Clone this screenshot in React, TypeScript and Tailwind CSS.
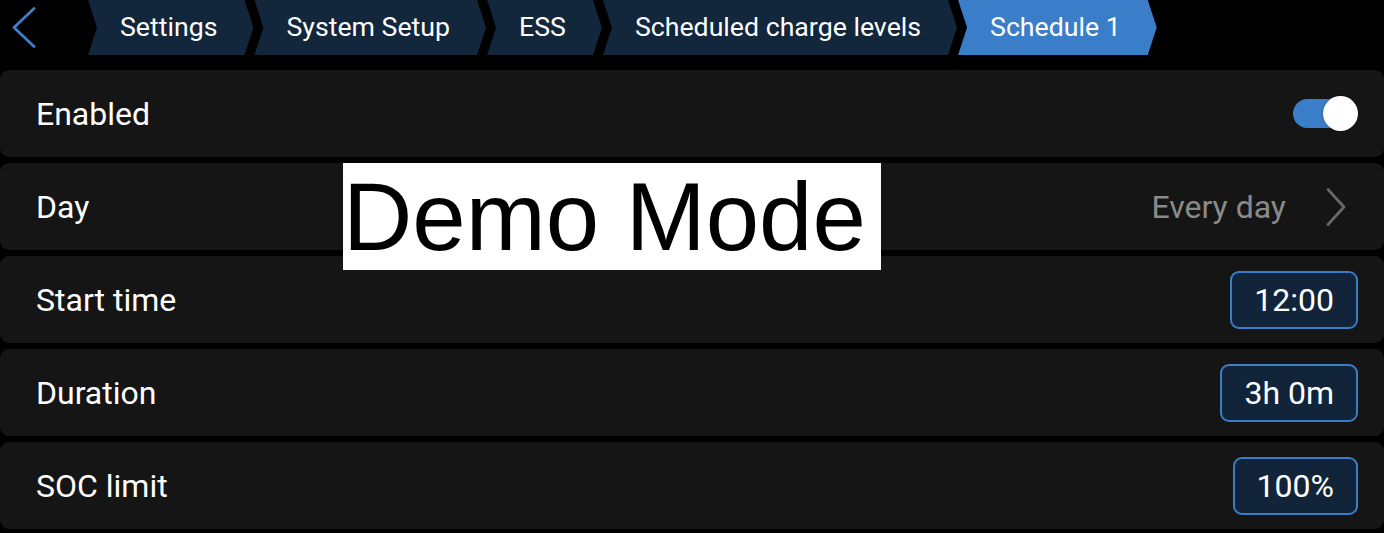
import React from "react";

const crumbs = [
  { label: "Settings", active: false },
  { label: "System Setup", active: false },
  { label: "ESS", active: false },
  { label: "Scheduled charge levels", active: false },
  { label: "Schedule 1", active: true },
];

function Crumb({ label, active }: { label: string; active: boolean }) {
  return (
    <div
      className={`h-[55px] flex items-center pl-[32px] pr-[36px] text-[26.7px] text-white whitespace-nowrap [clip-path:polygon(0_0,calc(100%-9px)_0,100%_50%,calc(100%-9px)_100%,0_100%,9px_50%)] ${
        active ? "bg-[#3a7dc9]" : "bg-[#12263c]"
      }`}
    >
      {label}
    </div>
  );
}

function ValueButton({ text }: { text: string }) {
  return (
    <div className="h-[58px] px-[22px] flex items-center rounded-[9px] border-2 border-[#3a7dc9] bg-[#11243a] text-[32px] text-white">
      {text}
    </div>
  );
}

function Row({ label, children, pr = "pr-[26px]" }: { label: string; children?: React.ReactNode; pr?: string }) {
  return (
    <div className={`h-[87px] rounded-[9px] bg-[#151515] flex items-center justify-between pl-[36px] ${pr}`}>
      <span className="text-[32px] text-white">{label}</span>
      {children}
    </div>
  );
}

export default function App() {
  return (
    <div className="relative w-[1384px] h-[533px] bg-black overflow-hidden font-['Roboto',sans-serif]">
      <div className="h-[55px] flex items-center">
        <div className="w-[88px] h-[55px] flex items-center pl-[12px]">
          <svg width="24" height="42" viewBox="0 0 24 42">
            <polyline points="22,1.5 2,20.5 22,39.5" fill="none" stroke="#3d7fca" strokeWidth="2.8" strokeLinecap="round" strokeLinejoin="round" />
          </svg>
        </div>
        <div className="flex gap-[1px]">
          {crumbs.map((c) => (
            <Crumb key={c.label} label={c.label} active={c.active} />
          ))}
        </div>
      </div>

      <div className="mt-[15px] flex flex-col gap-[6px]">
        <Row label="Enabled">
          <div className="relative w-[65px] h-[35px]">
            <div className="absolute left-0 top-[3px] w-[60px] h-[29px] rounded-full bg-[#3a7dc9]" />
            <div className="absolute right-0 top-0 w-[35px] h-[35px] rounded-full bg-white shadow-[0_0_2px_rgba(0,0,0,0.5)]" />
          </div>
        </Row>
        <Row label="Day" pr="pr-[38px]">
          <div className="flex items-center gap-[40px]">
            <span className="text-[32px] text-[#8a8a8a]">Every day</span>
            <svg width="20" height="38" viewBox="0 0 20 38">
              <polyline points="2,1.5 18,19 2,36.5" fill="none" stroke="#6a6a6a" strokeWidth="2.6" strokeLinecap="round" strokeLinejoin="round" />
            </svg>
          </div>
        </Row>
        <Row label="Start time">
          <ValueButton text="12:00" />
        </Row>
        <Row label="Duration">
          <ValueButton text="3h 0m" />
        </Row>
        <Row label="SOC limit">
          <ValueButton text="100%" />
        </Row>
      </div>

      <div className="absolute left-[343px] top-[163px] w-[538px] h-[107px] bg-white text-black text-[96px] leading-[107px] font-['Liberation_Sans',Arial,sans-serif] whitespace-nowrap">
        Demo Mode
      </div>
    </div>
  );
}
